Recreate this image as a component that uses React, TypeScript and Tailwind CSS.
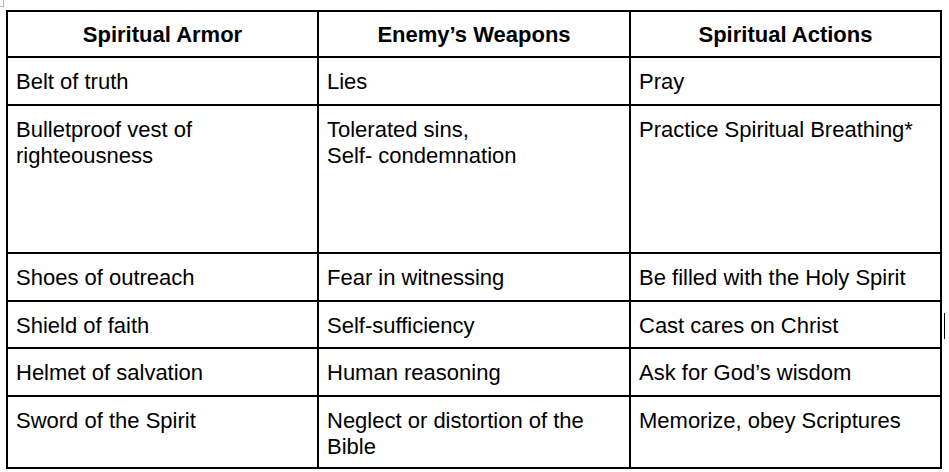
import React from 'react';

const rows: { h: string; cells: string[][] }[] = [
  { h: 'h-[48px]', cells: [['Belt of truth'], ['Lies'], ['Pray']] },
  {
    h: 'h-[148px]',
    cells: [
      ['Bulletproof vest of', 'righteousness'],
      ['Tolerated sins,', 'Self- condemnation'],
      ['Practice Spiritual Breathing*'],
    ],
  },
  { h: 'h-[48px]', cells: [['Shoes of outreach'], ['Fear in witnessing'], ['Be filled with the Holy Spirit']] },
  { h: 'h-[47px]', cells: [['Shield of faith'], ['Self-sufficiency'], ['Cast cares on Christ']] },
  { h: 'h-[48px]', cells: [['Helmet of salvation'], ['Human reasoning'], ["Ask for God\u2019s wisdom"]] },
  {
    h: 'h-[72px]',
    cells: [['Sword of the Spirit'], ['Neglect or distortion of the', 'Bible'], ['Memorize, obey Scriptures']],
  },
];

const headers = ['Spiritual Armor', 'Enemy\u2019s Weapons', 'Spiritual Actions'];

export default function App() {
  return (
    <div className="relative w-[949px] h-[472px] bg-white overflow-hidden font-['Liberation_Sans',Arial,sans-serif] text-black">
      {/* page corner marker */}
      <div className="absolute left-0 top-0 w-[4px] h-[7px] border-r border-b border-[#b8b8b8]" />
      {/* text cursor */}
      <div className="absolute left-[944px] top-[313px] w-px h-[26px] bg-black" />

      <div className="pt-[10px] pl-[6px]">
        <div className="w-[936px] border-r-2 border-b-2 border-black text-[22px] leading-[26px]">
          <div className="grid grid-cols-[311px_312px_311px] h-[46px]">
            {headers.map((t) => (
              <div key={t} className="border-l-2 border-t-2 border-black pt-[10px] text-center font-bold">
                {t}
              </div>
            ))}
          </div>
          {rows.map((r, i) => (
            <div key={i} className={`grid grid-cols-[311px_312px_311px] ${r.h}`}>
              {r.cells.map((lines, j) => (
                <div key={j} className="border-l-2 border-t-2 border-black pt-[11px] pl-[8px]">
                  {lines.map((l) => (
                    <div key={l}>{l}</div>
                  ))}
                </div>
              ))}
            </div>
          ))}
        </div>
      </div>
    </div>
  );
}
